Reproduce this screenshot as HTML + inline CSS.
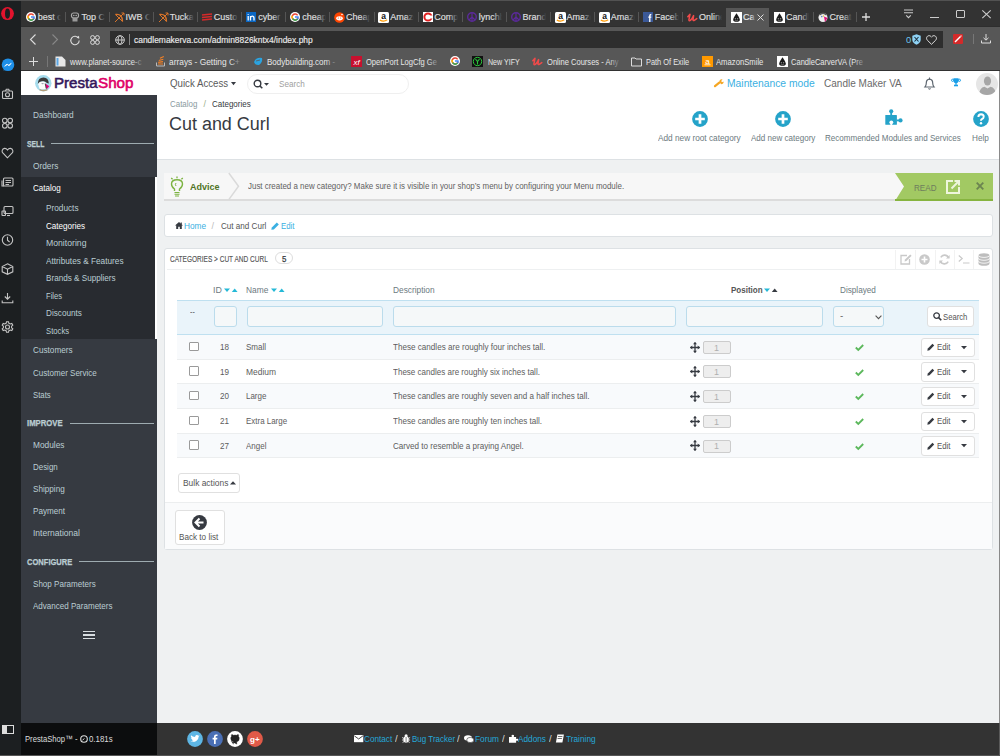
<!DOCTYPE html>
<html><head><meta charset="utf-8">
<style>
*{margin:0;padding:0;box-sizing:border-box}
html,body{width:1000px;height:756px;overflow:hidden;background:#eff1f2;font-family:"Liberation Sans",sans-serif;position:relative}
.a{position:absolute}
.t{position:absolute;white-space:pre;transform-origin:0 0}
svg{position:absolute;overflow:visible}
</style></head><body>
<div class="a" style="left:0px;top:0px;width:21px;height:756px;background:#1c1f21"></div>
<div class="a" style="left:21px;top:0px;width:979px;height:27px;background:#333"></div>
<div class="a" style="left:0px;top:0px;width:1000px;height:1px;background:#525252"></div>
<div class="a" style="left:21px;top:26px;width:979px;height:1px;background:#2e2e2e"></div>
<div class="a" style="left:21px;top:27px;width:979px;height:43px;background:#575757"></div>
<div class="a" style="left:21px;top:70px;width:979px;height:1px;background:#323232"></div>
<div class="a" style="left:110px;top:31px;width:833px;height:17px;background:#2e2e2e"></div>
<div class="a" style="left:21px;top:71px;width:979px;height:24px;background:#fff"></div>
<div class="a" style="left:21px;top:95px;width:136px;height:628px;background:#363a41"></div>
<div class="a" style="left:21px;top:177px;width:134px;height:162px;background:#282b30"></div>
<div class="a" style="left:155px;top:177px;width:2px;height:162px;background:#fff"></div>
<div class="a" style="left:157px;top:95px;width:843px;height:65px;background:#fff;border-bottom:1px solid #dde1e4"></div>
<div class="a" style="left:21px;top:723px;width:136px;height:32px;background:#0c0d0e"></div>
<div class="a" style="left:157px;top:723px;width:843px;height:32px;background:#333"></div>
<div class="a" style="left:999px;top:723px;width:1px;height:32px;background:#5a5a5a"></div>
<div class="a" style="left:0px;top:755px;width:1000px;height:1px;background:#555"></div>
<div class="a" style="left:999px;top:71px;width:1px;height:652px;background:#8a8a8a"></div>
<span class="t" style="left:32.90px;top:111.00px;font-size:8.7px;line-height:8.7px;color:#bbcdd2;font-weight:normal;transform:scaleX(0.9581);">Dashboard</span>
<span class="t" style="left:26.90px;top:140.10px;font-size:8.7px;line-height:8.7px;color:#bbcdd2;font-weight:bold;transform:scaleX(0.7870);-webkit-text-stroke:0.25px #bbcdd2;">SELL</span>
<div class="a" style="left:51px;top:143px;width:103px;height:1px;background:#9eabb0"></div>
<span class="t" style="left:32.90px;top:162.30px;font-size:8.7px;line-height:8.7px;color:#bbcdd2;font-weight:normal;transform:scaleX(0.9575);">Orders</span>
<span class="t" style="left:32.90px;top:184.40px;font-size:8.7px;line-height:8.7px;color:#fff;font-weight:normal;transform:scaleX(0.9255);">Catalog</span>
<span class="t" style="left:45.70px;top:204.20px;font-size:8.7px;line-height:8.7px;color:#bbcdd2;font-weight:normal;transform:scaleX(0.9485);">Products</span>
<span class="t" style="left:45.70px;top:221.70px;font-size:8.7px;line-height:8.7px;color:#fff;font-weight:normal;transform:scaleX(0.9312);">Categories</span>
<span class="t" style="left:45.70px;top:239.20px;font-size:8.7px;line-height:8.7px;color:#bbcdd2;font-weight:normal;transform:scaleX(0.9972);">Monitoring</span>
<span class="t" style="left:45.70px;top:256.71px;font-size:8.7px;line-height:8.7px;color:#bbcdd2;font-weight:normal;transform:scaleX(0.9500);">Attributes &amp; Features</span>
<span class="t" style="left:45.70px;top:274.21px;font-size:8.7px;line-height:8.7px;color:#bbcdd2;font-weight:normal;transform:scaleX(0.9361);">Brands &amp; Suppliers</span>
<span class="t" style="left:45.70px;top:291.71px;font-size:8.7px;line-height:8.7px;color:#bbcdd2;font-weight:normal;transform:scaleX(0.8780);">Files</span>
<span class="t" style="left:45.70px;top:309.21px;font-size:8.7px;line-height:8.7px;color:#bbcdd2;font-weight:normal;transform:scaleX(0.9416);">Discounts</span>
<span class="t" style="left:45.70px;top:326.71px;font-size:8.7px;line-height:8.7px;color:#bbcdd2;font-weight:normal;transform:scaleX(0.8861);">Stocks</span>
<span class="t" style="left:32.90px;top:346.41px;font-size:8.7px;line-height:8.7px;color:#bbcdd2;font-weight:normal;transform:scaleX(0.9435);">Customers</span>
<span class="t" style="left:32.90px;top:368.61px;font-size:8.7px;line-height:8.7px;color:#bbcdd2;font-weight:normal;transform:scaleX(0.9243);">Customer Service</span>
<span class="t" style="left:32.90px;top:390.71px;font-size:8.7px;line-height:8.7px;color:#bbcdd2;font-weight:normal;transform:scaleX(0.8939);">Stats</span>
<span class="t" style="left:26.90px;top:419.21px;font-size:8.7px;line-height:8.7px;color:#bbcdd2;font-weight:bold;transform:scaleX(0.8910);-webkit-text-stroke:0.25px #bbcdd2;">IMPROVE</span>
<div class="a" style="left:70px;top:423px;width:84px;height:1px;background:#9eabb0"></div>
<span class="t" style="left:32.90px;top:441.01px;font-size:8.7px;line-height:8.7px;color:#bbcdd2;font-weight:normal;transform:scaleX(0.9570);">Modules</span>
<span class="t" style="left:32.90px;top:463.11px;font-size:8.7px;line-height:8.7px;color:#bbcdd2;font-weight:normal;transform:scaleX(0.9139);">Design</span>
<span class="t" style="left:32.90px;top:485.21px;font-size:8.7px;line-height:8.7px;color:#bbcdd2;font-weight:normal;transform:scaleX(0.9379);">Shipping</span>
<span class="t" style="left:32.90px;top:507.31px;font-size:8.7px;line-height:8.7px;color:#bbcdd2;font-weight:normal;transform:scaleX(0.9338);">Payment</span>
<span class="t" style="left:32.90px;top:529.41px;font-size:8.7px;line-height:8.7px;color:#bbcdd2;font-weight:normal;transform:scaleX(0.9815);">International</span>
<span class="t" style="left:26.90px;top:557.61px;font-size:8.7px;line-height:8.7px;color:#bbcdd2;font-weight:bold;transform:scaleX(0.8691);-webkit-text-stroke:0.25px #bbcdd2;">CONFIGURE</span>
<div class="a" style="left:79px;top:561px;width:75px;height:1px;background:#9eabb0"></div>
<span class="t" style="left:32.90px;top:579.81px;font-size:8.7px;line-height:8.7px;color:#bbcdd2;font-weight:normal;transform:scaleX(0.9277);">Shop Parameters</span>
<span class="t" style="left:32.90px;top:601.91px;font-size:8.7px;line-height:8.7px;color:#bbcdd2;font-weight:normal;transform:scaleX(0.9250);">Advanced Parameters</span>
<div class="a" style="left:83px;top:631.0px;width:12px;height:1.4px;background:#d8dde0"></div>
<div class="a" style="left:83px;top:634.4px;width:12px;height:1.4px;background:#d8dde0"></div>
<div class="a" style="left:83px;top:637.8px;width:12px;height:1.4px;background:#d8dde0"></div>
<span class="t" style="left:169.90px;top:77.98px;font-size:11.2px;line-height:11.2px;color:#5a5a5a;font-weight:normal;transform:scaleX(0.8665);">Quick Access</span>
<div class="a" style="left:246.5px;top:74px;width:162.5px;height:20px;border:1px solid #efefef;border-radius:10px"></div>
<span class="t" style="left:278.98px;top:80.15px;font-size:9px;line-height:9px;color:#a0a0a0;font-weight:normal;transform:scaleX(0.9052);">Search</span>
<span class="t" style="left:726.64px;top:77.72px;font-size:10.8px;line-height:10.8px;color:#3ab0e2;font-weight:normal;transform:scaleX(0.9561);">Maintenance mode</span>
<span class="t" style="left:823.64px;top:78.02px;font-size:10.8px;line-height:10.8px;color:#6a6a6a;font-weight:normal;transform:scaleX(0.9281);">Candle Maker VA</span>
<span class="t" style="left:169.88px;top:99.95px;font-size:9px;line-height:9px;color:#8a9aa0;font-weight:normal;transform:scaleX(0.8803);">Catalog</span>
<span class="t" style="left:203.55px;top:99.95px;font-size:9px;line-height:9px;color:#9cb08c;font-weight:normal;">/</span>
<span class="t" style="left:212.28px;top:99.95px;font-size:9px;line-height:9px;color:#363a41;font-weight:normal;transform:scaleX(0.8895);">Categories</span>
<span class="t" style="left:169.10px;top:114.62px;font-size:18.8px;line-height:18.8px;color:#363a41;font-weight:normal;transform:scaleX(0.9552);">Cut and Curl</span>
<span class="t" style="left:657.90px;top:134.20px;font-size:8.7px;line-height:8.7px;color:#6c7a80;font-weight:normal;transform:scaleX(0.9505);">Add new root category</span>
<span class="t" style="left:750.50px;top:134.20px;font-size:8.7px;line-height:8.7px;color:#6c7a80;font-weight:normal;transform:scaleX(0.9249);">Add new category</span>
<span class="t" style="left:825.10px;top:134.20px;font-size:8.7px;line-height:8.7px;color:#6c7a80;font-weight:normal;transform:scaleX(0.9252);">Recommended Modules and Services</span>
<span class="t" style="left:972.30px;top:134.20px;font-size:8.7px;line-height:8.7px;color:#6c7a80;font-weight:normal;transform:scaleX(0.9414);">Help</span>
<div class="a" style="left:164px;top:173px;width:829px;height:28px;background:#f7f7f7;border-bottom:2px solid #dcdcdc"></div>
<span class="t" style="left:189.83px;top:181.94px;font-size:9.6px;line-height:9.6px;color:#4f7325;font-weight:bold;transform:scaleX(0.9394);">Advice</span>
<span class="t" style="left:247.90px;top:181.60px;font-size:8.7px;line-height:8.7px;color:#5f5f5f;font-weight:normal;transform:scaleX(0.9135);">Just created a new category? Make sure it is visible in your shop’s menu by configuring your Menu module.</span>
<div class="a" style="left:164px;top:214px;width:829px;height:23px;background:#fff;border:1px solid #dde1e4;border-radius:3px"></div>
<span class="t" style="left:184.18px;top:221.75px;font-size:9px;line-height:9px;color:#3ab0e2;font-weight:normal;transform:scaleX(0.9173);">Home</span>
<span class="t" style="left:211.55px;top:221.75px;font-size:9px;line-height:9px;color:#bbb;font-weight:normal;">/</span>
<span class="t" style="left:221.38px;top:221.75px;font-size:9px;line-height:9px;color:#555;font-weight:normal;transform:scaleX(0.8989);">Cut and Curl</span>
<span class="t" style="left:281.28px;top:221.75px;font-size:9px;line-height:9px;color:#3ab0e2;font-weight:normal;transform:scaleX(0.8710);">Edit</span>
<div class="a" style="left:164px;top:248px;width:829px;height:302px;background:#fff;border:1px solid #dde1e4;border-radius:3px"></div>
<svg style="left:1.2px;top:6.9px" width="13" height="13.2" viewBox="0 0 13 13.2"><ellipse cx="6.5" cy="6.6" rx="6.4" ry="6.5" fill="#e3132d"/><ellipse cx="6.5" cy="6.6" rx="2.5" ry="5.1" fill="#1c1f21"/></svg>
<svg style="left:1px;top:58px" width="14" height="14" viewBox="0 0 14 14"><circle cx="7" cy="6.8" r="6.3" fill="#1e8fe8"/><path d="M2.5 12.8 L3.6 9.8 L5.6 11.2Z" fill="#1e8fe8"/><path d="M3.6 8.3 L5.8 6 L7.3 7.5 L10.3 5.2 L8.2 7.7 L6.7 6.4Z" fill="#fff" stroke="#fff" stroke-width=".6"/></svg>
<svg style="left:1px;top:88px" width="13" height="12" viewBox="0 0 13 12" fill="none" stroke="#c4c4c4" stroke-width="1.1"><rect x="1.5" y="3" width="10" height="7.5" rx="1"/><path d="M4.5 3 L5.3 1.3 H7.7 L8.5 3"/><circle cx="6.5" cy="6.8" r="2"/></svg>
<svg style="left:1px;top:117px" width="13" height="12" viewBox="0 0 13 12" fill="none" stroke="#c4c4c4" stroke-width="1.1"><circle cx="3.8" cy="3.5" r="2.3"/><circle cx="9.2" cy="3.5" r="2.3"/><circle cx="3.8" cy="8.8" r="2.3"/><circle cx="9.2" cy="8.8" r="2.3"/></svg>
<svg style="left:1px;top:147px" width="13" height="12" viewBox="0 0 13 12" fill="none" stroke="#c4c4c4" stroke-width="1.1"><path d="M6.5 10.8 L1.8 6 C0.5 4.5 1 1.8 3.5 1.4 C5 1.2 6 2.3 6.5 3 C7 2.3 8 1.2 9.5 1.4 C12 1.8 12.5 4.5 11.2 6Z"/></svg>
<svg style="left:1px;top:176px" width="13" height="12" viewBox="0 0 13 12" fill="none" stroke="#c4c4c4" stroke-width="1.1"><rect x="2.5" y="2" width="9.5" height="8" rx="1"/><path d="M1 4.5 V10 H3 M4.5 4.5 H10 M4.5 6.5 H10 M4.5 8.5 H8"/></svg>
<svg style="left:1px;top:205px" width="13" height="12" viewBox="0 0 13 12" fill="none" stroke="#c4c4c4" stroke-width="1.1"><rect x="3" y="1.5" width="9" height="7" rx="1"/><rect x="1" y="6" width="3.5" height="4.5" rx=".5"/><path d="M6 10.5 H9"/></svg>
<svg style="left:1px;top:234px" width="13" height="12" viewBox="0 0 13 12" fill="none" stroke="#c4c4c4" stroke-width="1.1"><circle cx="6.5" cy="6" r="5.2"/><path d="M6.5 2.8 V6.2 L8.6 8"/></svg>
<svg style="left:1px;top:263px" width="13" height="12" viewBox="0 0 13 12" fill="none" stroke="#c4c4c4" stroke-width="1.1"><path d="M6.5 0.8 L11.8 3.5 V8.8 L6.5 11.3 L1.2 8.8 V3.5Z M1.2 3.5 L6.5 6.2 L11.8 3.5 M6.5 6.2 V11.3"/></svg>
<svg style="left:1px;top:292px" width="13" height="12" viewBox="0 0 13 12" fill="none" stroke="#c4c4c4" stroke-width="1.1"><path d="M6.5 1 V7 M3.8 4.5 L6.5 7.2 L9.2 4.5 M1.2 8.5 V10.8 H11.8 V8.5"/></svg>
<svg style="left:1px;top:321px" width="13" height="12" viewBox="0 0 13 12" fill="none" stroke="#c4c4c4" stroke-width="1.1"><circle cx="6.5" cy="6" r="2"/><path d="M5.5 0.8 H7.5 L7.9 2.3 L9.3 3 L10.8 2.4 L11.8 4.1 L10.6 5.2 V6.8 L11.8 7.9 L10.8 9.6 L9.3 9 L7.9 9.7 L7.5 11.2 H5.5 L5.1 9.7 L3.7 9 L2.2 9.6 L1.2 7.9 L2.4 6.8 V5.2 L1.2 4.1 L2.2 2.4 L3.7 3 L5.1 2.3Z"/></svg>
<svg style="left:2px;top:725px" width="12" height="9" viewBox="0 0 12 9"><rect x=".5" y=".5" width="11" height="8" fill="none" stroke="#ddd"/><rect x="1" y="1" width="4" height="7" fill="#ddd"/></svg>
<div class="a" style="left:726.3px;top:8px;width:42.6px;height:19px;background:#575757"></div>
<svg style="left:25.6px;top:11.5px" width="11" height="11" viewBox="0 0 11 11"><circle cx="5" cy="5" r="5" fill="#fff"/><path d="M7.6 3.3 A3 3 0 1 0 8 5.6" fill="none" stroke="#ea4335" stroke-width="1.5"/><path d="M2.3 3.8 A3 3 0 0 0 2.6 6.6" fill="none" stroke="#fbbc05" stroke-width="1.5"/><path d="M2.6 6.6 A3 3 0 0 0 7.6 7" fill="none" stroke="#34a853" stroke-width="1.5"/><path d="M5 5 H8 A3 3 0 0 1 7.6 7" fill="none" stroke="#4285f4" stroke-width="1.5"/></svg>
<span class="t" style="left:37.65px;top:13.25px;font-size:9px;line-height:9px;color:#dcdcdc;font-weight:normal;-webkit-text-stroke:0.2px #dcdcdc;">best c</span>
<div class="a" style="left:52.3px;top:10px;width:9px;height:14px;background:linear-gradient(to right, rgba(51,51,51,0), #333)"></div>
<div class="a" style="left:61.3px;top:10px;width:4px;height:14px;background:#333"></div>
<div class="a" style="left:64.8px;top:12px;width:1px;height:10px;background:#555"></div>
<svg style="left:69.7px;top:11.5px" width="11" height="11" viewBox="0 0 11 11"><rect x="1.5" y="1" width="7" height="5" rx="2" fill="none" stroke="#aaa" stroke-width="1.2"/><rect x="2.5" y="5.5" width="5" height="4" fill="#999"/><circle cx="3.8" cy="3.5" r=".8" fill="#aaa"/><circle cx="6.2" cy="3.5" r=".8" fill="#aaa"/></svg>
<span class="t" style="left:81.48px;top:13.25px;font-size:9px;line-height:9px;color:#dcdcdc;font-weight:normal;-webkit-text-stroke:0.2px #dcdcdc;">Top C</span>
<div class="a" style="left:96.4px;top:10px;width:9px;height:14px;background:linear-gradient(to right, rgba(51,51,51,0), #333)"></div>
<div class="a" style="left:105.4px;top:10px;width:4px;height:14px;background:#333"></div>
<div class="a" style="left:108.9px;top:12px;width:1px;height:10px;background:#555"></div>
<svg style="left:113.8px;top:11.5px" width="11" height="11" viewBox="0 0 11 11"><path d="M1.5 2.5 Q8.5 1.5 8.5 9.5" fill="none" stroke="#d9742a" stroke-width="1.3"/><path d="M1.5 2.5 L8.5 9.5 M1 10 L10 1 M7.5 1 H10 V3.5" fill="none" stroke="#d9742a" stroke-width="1"/></svg>
<span class="t" style="left:125.58px;top:13.25px;font-size:9px;line-height:9px;color:#dcdcdc;font-weight:normal;-webkit-text-stroke:0.2px #dcdcdc;">IWB C</span>
<div class="a" style="left:140.5px;top:10px;width:9px;height:14px;background:linear-gradient(to right, rgba(51,51,51,0), #333)"></div>
<div class="a" style="left:149.5px;top:10px;width:4px;height:14px;background:#333"></div>
<div class="a" style="left:153.0px;top:12px;width:1px;height:10px;background:#555"></div>
<svg style="left:157.90000000000003px;top:11.5px" width="11" height="11" viewBox="0 0 11 11"><path d="M1.5 2.5 Q8.5 1.5 8.5 9.5" fill="none" stroke="#d9742a" stroke-width="1.3"/><path d="M1.5 2.5 L8.5 9.5 M1 10 L10 1 M7.5 1 H10 V3.5" fill="none" stroke="#d9742a" stroke-width="1"/></svg>
<span class="t" style="left:169.68px;top:13.25px;font-size:9px;line-height:9px;color:#dcdcdc;font-weight:normal;-webkit-text-stroke:0.2px #dcdcdc;">Tuckal</span>
<div class="a" style="left:184.60000000000002px;top:10px;width:9px;height:14px;background:linear-gradient(to right, rgba(51,51,51,0), #333)"></div>
<div class="a" style="left:193.60000000000002px;top:10px;width:4px;height:14px;background:#333"></div>
<div class="a" style="left:197.10000000000002px;top:12px;width:1px;height:10px;background:#555"></div>
<svg style="left:202.00000000000003px;top:11.5px" width="11" height="11" viewBox="0 0 11 11"><path d="M0 3 L10 2 M0 5.5 L10 4.5 M0 8 L10 7" stroke="#d42a2a" stroke-width="1.6"/></svg>
<span class="t" style="left:213.78px;top:13.25px;font-size:9px;line-height:9px;color:#dcdcdc;font-weight:normal;-webkit-text-stroke:0.2px #dcdcdc;">Custo</span>
<div class="a" style="left:228.70000000000002px;top:10px;width:9px;height:14px;background:linear-gradient(to right, rgba(51,51,51,0), #333)"></div>
<div class="a" style="left:237.70000000000002px;top:10px;width:4px;height:14px;background:#333"></div>
<div class="a" style="left:241.20000000000002px;top:12px;width:1px;height:10px;background:#555"></div>
<svg style="left:246.10000000000002px;top:11.5px" width="11" height="11" viewBox="0 0 11 11"><rect x="0" y="0" width="10" height="10" fill="#0a66c2"/><path d="M2.2 4 V8.5 M2.2 2 V2.8 M4.5 8.5 V4 M4.5 5.5 Q5.5 3.8 7 4.3 Q8 4.7 8 6 V8.5" stroke="#fff" stroke-width="1.3" fill="none"/></svg>
<span class="t" style="left:258.15px;top:13.25px;font-size:9px;line-height:9px;color:#dcdcdc;font-weight:normal;-webkit-text-stroke:0.2px #dcdcdc;">cyber</span>
<div class="a" style="left:272.8px;top:10px;width:9px;height:14px;background:linear-gradient(to right, rgba(51,51,51,0), #333)"></div>
<div class="a" style="left:281.8px;top:10px;width:4px;height:14px;background:#333"></div>
<div class="a" style="left:285.3px;top:12px;width:1px;height:10px;background:#555"></div>
<svg style="left:290.20000000000005px;top:11.5px" width="11" height="11" viewBox="0 0 11 11"><circle cx="5" cy="5" r="5" fill="#fff"/><path d="M7.6 3.3 A3 3 0 1 0 8 5.6" fill="none" stroke="#ea4335" stroke-width="1.5"/><path d="M2.3 3.8 A3 3 0 0 0 2.6 6.6" fill="none" stroke="#fbbc05" stroke-width="1.5"/><path d="M2.6 6.6 A3 3 0 0 0 7.6 7" fill="none" stroke="#34a853" stroke-width="1.5"/><path d="M5 5 H8 A3 3 0 0 1 7.6 7" fill="none" stroke="#4285f4" stroke-width="1.5"/></svg>
<span class="t" style="left:302.25px;top:13.25px;font-size:9px;line-height:9px;color:#dcdcdc;font-weight:normal;-webkit-text-stroke:0.2px #dcdcdc;">cheap</span>
<div class="a" style="left:316.90000000000003px;top:10px;width:9px;height:14px;background:linear-gradient(to right, rgba(51,51,51,0), #333)"></div>
<div class="a" style="left:325.90000000000003px;top:10px;width:4px;height:14px;background:#333"></div>
<div class="a" style="left:329.40000000000003px;top:12px;width:1px;height:10px;background:#555"></div>
<svg style="left:334.3px;top:11.5px" width="11" height="11" viewBox="0 0 11 11"><circle cx="5.5" cy="5.5" r="5.3" fill="#ff4500"/><ellipse cx="5.5" cy="6.3" rx="3.3" ry="2.1" fill="#fff"/><circle cx="4.3" cy="6" r=".6" fill="#ff4500"/><circle cx="6.7" cy="6" r=".6" fill="#ff4500"/><circle cx="8" cy="2.5" r=".8" fill="#fff"/></svg>
<span class="t" style="left:346.08px;top:13.25px;font-size:9px;line-height:9px;color:#dcdcdc;font-weight:normal;-webkit-text-stroke:0.2px #dcdcdc;">Cheap</span>
<div class="a" style="left:361.0px;top:10px;width:9px;height:14px;background:linear-gradient(to right, rgba(51,51,51,0), #333)"></div>
<div class="a" style="left:370.0px;top:10px;width:4px;height:14px;background:#333"></div>
<div class="a" style="left:373.5px;top:12px;width:1px;height:10px;background:#555"></div>
<svg style="left:378.40000000000003px;top:11.5px" width="11" height="11" viewBox="0 0 11 11"><rect x="0" y="0" width="11" height="11" rx="1.5" fill="#fff"/><text x="5.5" y="7" font-size="8.5" font-family="Liberation Sans" font-weight="bold" text-anchor="middle" fill="#111">a</text><path d="M1.8 8 Q5.5 10.3 9.2 7.8" fill="none" stroke="#f90" stroke-width="1.2"/></svg>
<span class="t" style="left:390.18px;top:13.25px;font-size:9px;line-height:9px;color:#dcdcdc;font-weight:normal;-webkit-text-stroke:0.2px #dcdcdc;">Amazo</span>
<div class="a" style="left:405.1px;top:10px;width:9px;height:14px;background:linear-gradient(to right, rgba(51,51,51,0), #333)"></div>
<div class="a" style="left:414.1px;top:10px;width:4px;height:14px;background:#333"></div>
<div class="a" style="left:417.6px;top:12px;width:1px;height:10px;background:#555"></div>
<svg style="left:422.50000000000006px;top:11.5px" width="11" height="11" viewBox="0 0 11 11"><rect x="0" y="0" width="10" height="10" fill="#fff"/><circle cx="5" cy="5" r="3.6" fill="none" stroke="#e02020" stroke-width="2"/><rect x="7" y="3.5" width="3" height="3" fill="#fff"/></svg>
<span class="t" style="left:434.28px;top:13.25px;font-size:9px;line-height:9px;color:#dcdcdc;font-weight:normal;-webkit-text-stroke:0.2px #dcdcdc;">Comp</span>
<div class="a" style="left:449.20000000000005px;top:10px;width:9px;height:14px;background:linear-gradient(to right, rgba(51,51,51,0), #333)"></div>
<div class="a" style="left:458.20000000000005px;top:10px;width:4px;height:14px;background:#333"></div>
<div class="a" style="left:461.70000000000005px;top:12px;width:1px;height:10px;background:#555"></div>
<svg style="left:466.6px;top:11.5px" width="11" height="11" viewBox="0 0 11 11"><circle cx="5" cy="5" r="4.3" fill="none" stroke="#5b2a9a" stroke-width="1.4"/><path d="M5 0.7 V9.3 M5 5 L2 8 M5 5 L8 8" stroke="#5b2a9a" stroke-width="1.2"/></svg>
<span class="t" style="left:478.65px;top:13.25px;font-size:9px;line-height:9px;color:#dcdcdc;font-weight:normal;-webkit-text-stroke:0.2px #dcdcdc;">lynchb</span>
<div class="a" style="left:493.3px;top:10px;width:9px;height:14px;background:linear-gradient(to right, rgba(51,51,51,0), #333)"></div>
<div class="a" style="left:502.3px;top:10px;width:4px;height:14px;background:#333"></div>
<div class="a" style="left:505.8px;top:12px;width:1px;height:10px;background:#555"></div>
<svg style="left:510.70000000000005px;top:11.5px" width="11" height="11" viewBox="0 0 11 11"><circle cx="5" cy="5" r="4.3" fill="none" stroke="#5b2a9a" stroke-width="1.4"/><path d="M5 0.7 V9.3 M5 5 L2 8 M5 5 L8 8" stroke="#5b2a9a" stroke-width="1.2"/></svg>
<span class="t" style="left:522.48px;top:13.25px;font-size:9px;line-height:9px;color:#dcdcdc;font-weight:normal;-webkit-text-stroke:0.2px #dcdcdc;">Brand</span>
<div class="a" style="left:537.4000000000001px;top:10px;width:9px;height:14px;background:linear-gradient(to right, rgba(51,51,51,0), #333)"></div>
<div class="a" style="left:546.4000000000001px;top:10px;width:4px;height:14px;background:#333"></div>
<div class="a" style="left:549.9000000000001px;top:12px;width:1px;height:10px;background:#555"></div>
<svg style="left:554.8px;top:11.5px" width="11" height="11" viewBox="0 0 11 11"><rect x="0" y="0" width="11" height="11" rx="1.5" fill="#fff"/><text x="5.5" y="7" font-size="8.5" font-family="Liberation Sans" font-weight="bold" text-anchor="middle" fill="#111">a</text><path d="M1.8 8 Q5.5 10.3 9.2 7.8" fill="none" stroke="#f90" stroke-width="1.2"/></svg>
<span class="t" style="left:566.58px;top:13.25px;font-size:9px;line-height:9px;color:#dcdcdc;font-weight:normal;-webkit-text-stroke:0.2px #dcdcdc;">Amazo</span>
<div class="a" style="left:581.5px;top:10px;width:9px;height:14px;background:linear-gradient(to right, rgba(51,51,51,0), #333)"></div>
<div class="a" style="left:590.5px;top:10px;width:4px;height:14px;background:#333"></div>
<div class="a" style="left:594.0px;top:12px;width:1px;height:10px;background:#555"></div>
<svg style="left:598.9px;top:11.5px" width="11" height="11" viewBox="0 0 11 11"><rect x="0" y="0" width="11" height="11" rx="1.5" fill="#fff"/><text x="5.5" y="7" font-size="8.5" font-family="Liberation Sans" font-weight="bold" text-anchor="middle" fill="#111">a</text><path d="M1.8 8 Q5.5 10.3 9.2 7.8" fill="none" stroke="#f90" stroke-width="1.2"/></svg>
<span class="t" style="left:610.68px;top:13.25px;font-size:9px;line-height:9px;color:#dcdcdc;font-weight:normal;-webkit-text-stroke:0.2px #dcdcdc;">Amazo</span>
<div class="a" style="left:625.6px;top:10px;width:9px;height:14px;background:linear-gradient(to right, rgba(51,51,51,0), #333)"></div>
<div class="a" style="left:634.6px;top:10px;width:4px;height:14px;background:#333"></div>
<div class="a" style="left:638.1px;top:12px;width:1px;height:10px;background:#555"></div>
<svg style="left:642.9999999999999px;top:11.5px" width="11" height="11" viewBox="0 0 11 11"><rect x="0" y="0" width="10" height="10" fill="#3b5998"/><path d="M6.8 10 V5.2 H8.2 M5.3 5.2 H8.3 M6.8 5.2 V3.8 Q6.8 2.5 8.3 2.5" fill="none" stroke="#fff" stroke-width="1.3"/></svg>
<span class="t" style="left:654.78px;top:13.25px;font-size:9px;line-height:9px;color:#dcdcdc;font-weight:normal;-webkit-text-stroke:0.2px #dcdcdc;">Faceb</span>
<div class="a" style="left:669.6999999999999px;top:10px;width:9px;height:14px;background:linear-gradient(to right, rgba(51,51,51,0), #333)"></div>
<div class="a" style="left:678.6999999999999px;top:10px;width:4px;height:14px;background:#333"></div>
<div class="a" style="left:682.1999999999999px;top:12px;width:1px;height:10px;background:#555"></div>
<svg style="left:687.0999999999999px;top:11.5px" width="11" height="11" viewBox="0 0 11 11"><path d="M0.8 4.8 L3 2.3 L1.9 8 Q2 9.3 3.4 8.4 Q5.3 6.6 6.6 3.6 L6 7.8 Q6.1 9 7.3 8.3 L9.8 6.6" fill="none" stroke="#f04a4a" stroke-width="1.5" stroke-linecap="round" stroke-linejoin="round"/></svg>
<span class="t" style="left:698.88px;top:13.25px;font-size:9px;line-height:9px;color:#dcdcdc;font-weight:normal;-webkit-text-stroke:0.2px #dcdcdc;">Online</span>
<div class="a" style="left:713.3px;top:10px;width:9px;height:14px;background:linear-gradient(to right, rgba(51,51,51,0), #333)"></div>
<div class="a" style="left:722.3px;top:10px;width:4px;height:14px;background:#333"></div>
<svg style="left:731.1999999999999px;top:11.5px" width="11" height="11" viewBox="0 0 11 11"><rect x="0" y="0" width="11" height="11" fill="#fff"/><path d="M5.5 1.2 Q8.8 6 8.8 7.8 Q8.8 9.8 5.5 9.8 Q2.2 9.8 2.2 7.8 Q2.2 6 5.5 1.2Z" fill="#1a1a1a"/><circle cx="4.4" cy="6.8" r=".7" fill="#888"/><circle cx="6.6" cy="6.8" r=".7" fill="#888"/><path d="M3.8 8.6 H7.2" stroke="#888" stroke-width=".6"/></svg>
<span class="t" style="left:742.98px;top:13.25px;font-size:9px;line-height:9px;color:#e4e4e4;font-weight:normal;-webkit-text-stroke:0.2px #e4e4e4;">Ca</span>
<div class="a" style="left:750.9px;top:10px;width:5px;height:14px;background:linear-gradient(to right, rgba(87,87,87,0), #575757)"></div>
<svg style="left:756.9px;top:14px" width="7" height="7" viewBox="0 0 7 7"><path d="M0.5 0.5 L6.5 6.5 M6.5 0.5 L0.5 6.5" stroke="#ddd" stroke-width="1"/></svg>
<svg style="left:774.3px;top:11.5px" width="11" height="11" viewBox="0 0 11 11"><rect x="0" y="0" width="11" height="11" fill="#fff"/><path d="M5.5 1.2 Q8.8 6 8.8 7.8 Q8.8 9.8 5.5 9.8 Q2.2 9.8 2.2 7.8 Q2.2 6 5.5 1.2Z" fill="#1a1a1a"/><circle cx="4.4" cy="6.8" r=".7" fill="#888"/><circle cx="6.6" cy="6.8" r=".7" fill="#888"/><path d="M3.8 8.6 H7.2" stroke="#888" stroke-width=".6"/></svg>
<span class="t" style="left:786.08px;top:13.25px;font-size:9px;line-height:9px;color:#dcdcdc;font-weight:normal;-webkit-text-stroke:0.2px #dcdcdc;">Candl</span>
<div class="a" style="left:800.2px;top:10px;width:9px;height:14px;background:linear-gradient(to right, rgba(51,51,51,0), #333)"></div>
<div class="a" style="left:809.2px;top:10px;width:4px;height:14px;background:#333"></div>
<div class="a" style="left:812.7px;top:12px;width:1px;height:10px;background:#555"></div>
<svg style="left:817.8px;top:11.5px" width="11" height="11" viewBox="0 0 11 11"><circle cx="5" cy="5.5" r="4.5" fill="#f0f0f0"/><path d="M1.5 3 Q5 -0.5 8.5 3" fill="none" stroke="#555" stroke-width="1.2"/><path d="M6 4.5 L9.5 6 L7 10Z" fill="#e0107a"/><circle cx="3.8" cy="4.6" r=".8" fill="#5a7ac8"/><circle cx="5.5" cy="4" r=".7" fill="#e8c020"/></svg>
<span class="t" style="left:829.58px;top:13.25px;font-size:9px;line-height:9px;color:#dcdcdc;font-weight:normal;-webkit-text-stroke:0.2px #dcdcdc;">Create</span>
<div class="a" style="left:843.4px;top:10px;width:9px;height:14px;background:linear-gradient(to right, rgba(51,51,51,0), #333)"></div>
<div class="a" style="left:852.4px;top:10px;width:4px;height:14px;background:#333"></div>
<div class="a" style="left:855.9px;top:12px;width:1px;height:10px;background:#555"></div>
<svg style="left:862px;top:13px" width="8" height="8" viewBox="0 0 8 8"><path d="M4 0 V8 M0 4 H8" stroke="#ddd" stroke-width="1.3"/></svg>
<svg style="left:904px;top:8.5px" width="9" height="10" viewBox="0 0 9 10"><path d="M0 1 H9 M0 3.7 H9 M2.2 6.3 L4.5 8.6 L6.8 6.3" fill="none" stroke="#ccc" stroke-width="1.1"/></svg>
<div class="a" style="left:930px;top:17px;width:8.5px;height:1px;background:#ccc"></div>
<div class="a" style="left:955.7px;top:9.5px;width:9px;height:8.5px;border:1.2px solid #ccc;border-radius:1px"></div>
<svg style="left:982px;top:9.5px" width="9" height="8.5" viewBox="0 0 9 8.5"><path d="M0.3 0.3 L8.7 8.2 M8.7 0.3 L0.3 8.2" stroke="#ccc" stroke-width="1.1"/></svg>
<svg style="left:29px;top:34px" width="8" height="11" viewBox="0 0 8 11"><path d="M6.5 0.5 L1.5 5.5 L6.5 10.5" fill="none" stroke="#ddd" stroke-width="1.1"/></svg>
<svg style="left:51px;top:34px" width="8" height="11" viewBox="0 0 8 11"><path d="M1.5 0.5 L6.5 5.5 L1.5 10.5" fill="none" stroke="#888" stroke-width="1.1"/></svg>
<svg style="left:70px;top:34.5px" width="10" height="10" viewBox="0 0 10 10"><path d="M8.6 3.3 A4.2 4.2 0 1 0 9.2 5.5" fill="none" stroke="#ddd" stroke-width="1.1"/><path d="M6.5 2.5 L9.3 3.6 L9 0.8Z" fill="#ddd"/></svg>
<svg style="left:90px;top:35px" width="10" height="10" viewBox="0 0 10 10" fill="none" stroke="#ddd" stroke-width="1"><circle cx="2.6" cy="2.6" r="2"/><circle cx="7.4" cy="2.6" r="2"/><circle cx="2.6" cy="7.4" r="2"/><circle cx="7.4" cy="7.4" r="2"/></svg>
<svg style="left:114.5px;top:34.5px" width="10" height="10" viewBox="0 0 10 10" fill="none" stroke="#ccc" stroke-width="1"><circle cx="5" cy="5" r="4.3"/><ellipse cx="5" cy="5" rx="2" ry="4.3"/><path d="M0.7 5 H9.3"/></svg>
<div class="a" style="left:128.5px;top:34px;width:1.2px;height:11px;background:#888"></div>
<span class="t" style="left:134.17px;top:35.67px;font-size:8.5px;line-height:8.5px;color:#eaeaea;font-weight:normal;transform:scaleX(0.9927);-webkit-text-stroke:0.15px #eaeaea;">candlemakerva.com/admin8826kntx4/index.php</span>
<span class="t" style="left:906.05px;top:35.95px;font-size:9px;line-height:9px;color:#6cc3f0;font-weight:normal;transform:scaleX(1.0437);">0</span>
<svg style="left:912px;top:34px" width="9" height="11" viewBox="0 0 9 11"><path d="M4.5 0.3 L8.7 1.8 V5.5 Q8.7 9 4.5 10.7 Q0.3 9 0.3 5.5 V1.8Z" fill="#8fd3f5"/><path d="M2.5 3 L6.5 7.5 M6.5 3 L2.5 7.5" stroke="#1f3240" stroke-width="1.1"/></svg>
<svg style="left:926px;top:35px" width="11" height="10" viewBox="0 0 11 10"><path d="M5.5 9.3 L1.3 5.2 C-0.2 3.5 0.7 0.8 3 0.7 C4.3 0.6 5 1.5 5.5 2.2 C6 1.5 6.7 0.6 8 0.7 C10.3 0.8 11.2 3.5 9.7 5.2Z" fill="none" stroke="#ddd" stroke-width="1"/></svg>
<svg style="left:953px;top:34px" width="10" height="10" viewBox="0 0 10 10"><rect width="10" height="10" rx="1.3" fill="#d42a2a"/><path d="M2 8 L7.5 2.5" stroke="#fff" stroke-width="1.4"/><path d="M8 1.3 V2.6 M7.6 2 H8.6" stroke="#fff" stroke-width=".6"/></svg>
<div class="a" style="left:973px;top:34px;width:1px;height:10px;background:#777"></div>
<svg style="left:981px;top:34px" width="10" height="10" viewBox="0 0 10 10" fill="none" stroke="#ddd" stroke-width="1"><path d="M5 0 V6 M2.5 3.8 L5 6.2 L7.5 3.8 M0.5 6.5 V9 H9.5 V6.5"/></svg>
<svg style="left:28.5px;top:56.5px" width="9" height="9" viewBox="0 0 9 9"><path d="M4.5 0 V9 M0 4.5 H9" stroke="#ddd" stroke-width="1"/></svg>
<div class="a" style="left:46.5px;top:56px;width:1.2px;height:10.5px;background:#777"></div>
<svg style="left:55px;top:56px" width="11" height="11" viewBox="0 0 11 11"><path d="M0.5 0.5 H7 L10.5 4 V10.5 H0.5Z" fill="#e8e8e8"/><rect x="1.5" y="2" width="2" height="7.5" fill="#5aa7e6"/></svg>
<span class="t" style="left:70.25px;top:57.95px;font-size:9px;line-height:9px;color:#e8e8e8;font-weight:normal;transform:scaleX(0.8559);">www.planet-source-c</span>
<div class="a" style="left:132.0px;top:55px;width:12px;height:14px;background:linear-gradient(to right, rgba(87,87,87,0), #575757)"></div>
<span class="t" style="left:168.55px;top:57.95px;font-size:9px;line-height:9px;color:#e8e8e8;font-weight:normal;transform:scaleX(0.9296);">arrays - Getting C+</span>
<div class="a" style="left:229.7px;top:55px;width:12px;height:14px;background:linear-gradient(to right, rgba(87,87,87,0), #575757)"></div>
<span class="t" style="left:267.28px;top:57.95px;font-size:9px;line-height:9px;color:#e8e8e8;font-weight:normal;transform:scaleX(0.8899);">Bodybuilding.com -</span>
<div class="a" style="left:325.8px;top:55px;width:12px;height:14px;background:linear-gradient(to right, rgba(87,87,87,0), #575757)"></div>
<span class="t" style="left:366.28px;top:57.95px;font-size:9px;line-height:9px;color:#e8e8e8;font-weight:normal;transform:scaleX(0.8385);">OpenPort LogCfg Ge</span>
<div class="a" style="left:427.6px;top:55px;width:12px;height:14px;background:linear-gradient(to right, rgba(87,87,87,0), #575757)"></div>
<span class="t" style="left:487.88px;top:57.95px;font-size:9px;line-height:9px;color:#e8e8e8;font-weight:normal;transform:scaleX(0.7850);">New YIFY</span>
<span class="t" style="left:547.08px;top:57.95px;font-size:9px;line-height:9px;color:#e8e8e8;font-weight:normal;transform:scaleX(0.8407);">Online Courses - Any</span>
<div class="a" style="left:609.0px;top:55px;width:12px;height:14px;background:linear-gradient(to right, rgba(87,87,87,0), #575757)"></div>
<span class="t" style="left:645.78px;top:57.95px;font-size:9px;line-height:9px;color:#e8e8e8;font-weight:normal;transform:scaleX(0.8223);">Path Of Exile</span>
<span class="t" style="left:716.48px;top:57.95px;font-size:9px;line-height:9px;color:#e8e8e8;font-weight:normal;transform:scaleX(0.8537);">AmazonSmile</span>
<span class="t" style="left:791.28px;top:57.95px;font-size:9px;line-height:9px;color:#e8e8e8;font-weight:normal;transform:scaleX(0.8373);">CandleCarverVA (Pre</span>
<div class="a" style="left:853.6px;top:55px;width:12px;height:14px;background:linear-gradient(to right, rgba(87,87,87,0), #575757)"></div>
<svg style="left:154.7px;top:56px" width="11" height="11" viewBox="0 0 11 11"><path d="M1.5 6.5 V10 H9.5 V6.5" fill="none" stroke="#bbb" stroke-width="1"/><path d="M3 8 H8 M3.2 6.4 L8 5.6 M3.8 4.5 L8.3 3.2 M5 2.3 L8.8 0.6" stroke="#f48024" stroke-width="1.1"/></svg>
<svg style="left:253px;top:56px" width="11" height="11" viewBox="0 0 11 11"><path d="M1 6 Q3 1 9 2 Q10 6 6 9 Q2 9.5 1 6Z" fill="#2ba3e0"/><path d="M3 5 L7 4" stroke="#575757" stroke-width=".8"/></svg>
<svg style="left:351.4px;top:56px" width="11" height="11" viewBox="0 0 11 11"><rect width="11" height="11" fill="#c8102e"/><text x="5.5" y="8.5" font-size="8" font-family="Liberation Sans" text-anchor="middle" fill="#fff" font-style="italic">xf</text></svg>
<svg style="left:449.6px;top:56px" width="11" height="11" viewBox="0 0 11 11"><circle cx="5" cy="5" r="5" fill="#fff"/><path d="M7.6 3.3 A3 3 0 1 0 8 5.6" fill="none" stroke="#ea4335" stroke-width="1.5"/><path d="M2.3 3.8 A3 3 0 0 0 2.6 6.6" fill="none" stroke="#fbbc05" stroke-width="1.5"/><path d="M2.6 6.6 A3 3 0 0 0 7.6 7" fill="none" stroke="#34a853" stroke-width="1.5"/><path d="M5 5 H8 A3 3 0 0 1 7.6 7" fill="none" stroke="#4285f4" stroke-width="1.5"/></svg>
<svg style="left:472px;top:56px" width="11" height="11" viewBox="0 0 11 11"><rect width="11" height="11" fill="#111"/><circle cx="5.5" cy="5.5" r="4.2" fill="none" stroke="#29c43a" stroke-width="1"/><path d="M3.5 3 L5.5 5.5 L7.5 3 M5.5 5.5 V8.5" stroke="#29c43a" stroke-width="1.1" fill="none"/></svg>
<svg style="left:532px;top:56px" width="11" height="11" viewBox="0 0 11 11"><path d="M0.8 4.8 L3 2.3 L1.9 8 Q2 9.3 3.4 8.4 Q5.3 6.6 6.6 3.6 L6 7.8 Q6.1 9 7.3 8.3 L9.8 6.6" fill="none" stroke="#f04a4a" stroke-width="1.5" stroke-linecap="round" stroke-linejoin="round"/></svg>
<svg style="left:631px;top:56px" width="11" height="11" viewBox="0 0 11 11"><path d="M0.5 2 H4 L5 3 H10.5 V10 H0.5Z" fill="none" stroke="#ddd" stroke-width="1"/></svg>
<svg style="left:701.6px;top:56px" width="11" height="11" viewBox="0 0 11 11"><rect width="11" height="11" fill="#f90"/><text x="5.5" y="7.5" font-size="8" font-family="Liberation Sans" text-anchor="middle" fill="#fff">a</text><path d="M2.5 8.8 H8.5" stroke="#fff" stroke-width=".8"/></svg>
<svg style="left:776.5px;top:56px" width="11" height="11" viewBox="0 0 11 11"><rect x="0" y="0" width="11" height="11" fill="#fff"/><path d="M5.5 1.2 Q8.8 6 8.8 7.8 Q8.8 9.8 5.5 9.8 Q2.2 9.8 2.2 7.8 Q2.2 6 5.5 1.2Z" fill="#1a1a1a"/><circle cx="4.4" cy="6.8" r=".7" fill="#888"/><circle cx="6.6" cy="6.8" r=".7" fill="#888"/><path d="M3.8 8.6 H7.2" stroke="#888" stroke-width=".6"/></svg>
<svg style="left:34.5px;top:74.5px" width="17" height="17" viewBox="0 0 17 17"><circle cx="8.3" cy="8.3" r="8.2" fill="#a5dbec"/><path d="M2.8 9 Q3 2.6 8.5 2.6 Q13.6 2.8 13.8 8.5 L12 8 Q10 5.5 5 6.8 Z" fill="#3a3a3a"/><path d="M3.2 9.2 Q3.8 6.6 8 6.6 Q11 7 11.3 9.5 L11 13.8 Q7 15.2 4.4 13.6Z" fill="#fbfbfb"/><ellipse cx="7.6" cy="8.6" rx="1.3" ry=".7" fill="#9aa3b0"/><path d="M10.4 8.6 L14.3 11.3 L11.6 14.3Z" fill="#e5007a"/><path d="M10.2 8.5 L11.2 13.5" stroke="#222" stroke-width=".8"/><path d="M4.6 14.6 Q8.5 16.4 12.4 14.6" fill="none" stroke="#b49c78" stroke-width="1.3"/></svg>
<span class="t" style="left:53.63px;top:76.30px;font-size:14px;line-height:14px;color:#34175c;font-weight:normal;transform:scaleX(1.0775);-webkit-text-stroke:0.55px #34175c;">Presta</span>
<span class="t" style="left:97.98px;top:76.30px;font-size:14px;line-height:14px;color:#df0067;font-weight:normal;transform:scaleX(1.0858);-webkit-text-stroke:0.55px #df0067;">Shop</span>
<svg style="left:231.4px;top:81.6px" width="5" height="3.3" viewBox="0 0 5 3.3"><path d="M0 0 H5 L2.5 3.3Z" fill="#363a41"/></svg>
<svg style="left:252.5px;top:78.5px" width="16" height="11" viewBox="0 0 16 11"><circle cx="4.5" cy="4.5" r="3.3" fill="none" stroke="#363a41" stroke-width="1.4"/><path d="M7 7 L9.3 9.3" stroke="#363a41" stroke-width="1.6"/><path d="M11 4 H16 L13.5 6.8Z" fill="#363a41"/></svg>
<svg style="left:713.6px;top:78.8px" width="10" height="8" viewBox="0 0 10 8"><path d="M1 7.2 L5.3 3.6" stroke="#f5a623" stroke-width="2.2" stroke-linecap="round"/><path d="M5.2 2.2 Q6 0 8.5 0.4 L7.2 2 L8 3.2 L9.6 2.4 Q9.8 5 7 5.2Z" fill="#f5a623"/></svg>
<svg style="left:924px;top:76.8px" width="11" height="13" viewBox="0 0 11 13"><path d="M1 10 Q2.3 8.5 2.3 6 Q2.3 2.5 5.5 2.2 Q8.7 2.5 8.7 6 Q8.7 8.5 10 10Z" fill="none" stroke="#5e6770" stroke-width="1.2"/><path d="M5.5 0.5 V2 M4.3 11.5 Q5.5 12.8 6.7 11.5" stroke="#5e6770" stroke-width="1.1" fill="none"/></svg>
<svg style="left:950.8px;top:78px" width="10" height="9" viewBox="0 0 10 9"><path d="M2.4 0.3 H7.6 V2.8 Q7.6 5.2 5 5.4 Q2.4 5.2 2.4 2.8Z" fill="#1a9fe8"/><circle cx="1.6" cy="2.3" r="1.1" fill="none" stroke="#1a9fe8" stroke-width="1"/><circle cx="8.4" cy="2.3" r="1.1" fill="none" stroke="#1a9fe8" stroke-width="1"/><rect x="4.3" y="5.2" width="1.4" height="1.6" fill="#1a9fe8"/><rect x="3" y="6.7" width="4" height="1.6" fill="#1a9fe8"/></svg>
<div class="a" style="left:975.5px;top:72.5px;width:22px;height:22px;border-radius:50%;background:#e6e6e6;overflow:hidden"><svg style="left:0;top:0" width="22" height="22" viewBox="0 0 22 22"><ellipse cx="11.5" cy="8" rx="3.6" ry="4.6" fill="#a6a6a6"/><path d="M3 22 Q3.5 14.5 8.5 13.8 L11.5 15.5 L14.5 13.8 Q19.5 14.5 20 22Z" fill="#a6a6a6"/></svg></div>
<svg style="left:692px;top:110.5px" width="16" height="16" viewBox="0 0 16 16"><circle cx="8" cy="8" r="7.9" fill="#25a3c9"/><path d="M8 3.2 V12.8 M3.2 8 H12.8" stroke="#fff" stroke-width="2.7"/></svg>
<svg style="left:775.2px;top:110.5px" width="16" height="16" viewBox="0 0 16 16"><circle cx="8" cy="8" r="7.9" fill="#25a3c9"/><path d="M8 3.2 V12.8 M3.2 8 H12.8" stroke="#fff" stroke-width="2.7"/></svg>
<svg style="left:884px;top:108px" width="20" height="18" viewBox="0 0 20 18"><rect x="1.3" y="6.9" width="11.6" height="9.9" rx="0.6" fill="#25a3c9"/><circle cx="7.2" cy="3.3" r="2.1" fill="#25a3c9"/><rect x="6.3" y="4" width="1.8" height="3.5" fill="#25a3c9"/><circle cx="16.5" cy="12.4" r="2.1" fill="#25a3c9"/><rect x="12.5" y="11.5" width="3" height="1.8" fill="#25a3c9"/><circle cx="7.3" cy="14.3" r="1.9" fill="#fff"/><rect x="6.4" y="14.5" width="1.8" height="3" fill="#fff"/></svg>
<svg style="left:973.1px;top:110.5px" width="16" height="16" viewBox="0 0 16 16"><circle cx="8" cy="8" r="7.9" fill="#25a3c9"/><path d="M5.4 6 Q5.4 3.3 8.1 3.3 Q10.8 3.4 10.7 5.8 Q10.6 7.4 8.9 8.2 Q8 8.7 8 9.8" fill="none" stroke="#fff" stroke-width="2"/><circle cx="8" cy="12.3" r="1.2" fill="#fff"/></svg>
<svg style="left:170px;top:176px" width="14" height="21" viewBox="0 0 14 21"><path d="M4.5 15 V13 Q1.5 11 1.5 8 Q1.5 3.8 7 3.8 Q12.5 3.8 12.5 8 Q12.5 11 9.5 13 V15" fill="none" stroke="#7cb342" stroke-width="1.4"/><path d="M6 7 Q4.8 8.5 6 10" fill="none" stroke="#7cb342" stroke-width="1"/><path d="M4.5 16.5 H9.5 M4.5 18.3 H9.5 M5 20 H9" stroke="#7cb342" stroke-width="1.1"/><path d="M7 0.5 V2.3 M1.2 2 L2.6 3.3 M12.8 2 L11.4 3.3" stroke="#7cb342" stroke-width="1.3"/></svg>
<svg style="left:228px;top:173px" width="12" height="27" viewBox="0 0 12 27"><path d="M0.8 0 L10.5 13.3 L0.8 26.6" fill="none" stroke="#dadada" stroke-width="1.5"/></svg>
<svg style="left:895px;top:173px" width="98" height="28" viewBox="0 0 98 28"><path d="M0 0 H98 V28 H0 L9 13.5Z" fill="#a2c963"/><path d="M0 26 H98 V28 H0Z" fill="#86b43f"/></svg>
<span class="t" style="left:914.02px;top:183.07px;font-size:9.8px;line-height:9.8px;color:#6e7d5e;font-weight:normal;transform:scaleX(0.8271);">READ</span>
<svg style="left:946px;top:179.8px" width="14" height="14" viewBox="0 0 14 14"><path d="M7 1 H1 V13 H13 V7" fill="none" stroke="#eef6dd" stroke-width="2"/><path d="M5.5 8.5 L12.5 1.5 M8.5 1 H13 V5.5" fill="none" stroke="#eef6dd" stroke-width="2"/></svg>
<svg style="left:976px;top:182.4px" width="8" height="8" viewBox="0 0 8 8"><path d="M0.7 0.7 L7.3 7.3 M7.3 0.7 L0.7 7.3" stroke="#6b8450" stroke-width="1.8"/></svg>
<svg style="left:174.5px;top:222.3px" width="8" height="7" viewBox="0 0 8 7"><path d="M4 0 L8 3.6 H6.8 V7 H4.8 V4.8 H3.2 V7 H1.2 V3.6 H0Z" fill="#363a41"/><rect x="5.6" y="0.5" width="1.2" height="2" fill="#363a41"/></svg>
<svg style="left:271.2px;top:221.8px" width="8.5" height="8" viewBox="0 0 8.5 8"><path d="M0.3 7.7 L0.8 5.5 L5.8 0.5 L7.8 2.5 L2.8 7.5Z" fill="#3ab0e2"/></svg>
<span class="t" style="left:170.02px;top:254.27px;font-size:9.8px;line-height:9.8px;color:#555;font-weight:normal;transform:scaleX(0.6655);-webkit-text-stroke:0.15px #555;">CATEGORIES &gt; CUT AND CURL</span>
<div class="a" style="left:275.2px;top:251.8px;width:18.3px;height:12.2px;border:1px solid #ddd;border-radius:6px;background:#fff"></div>
<span class="t" style="left:281.84px;top:254.58px;font-size:9.2px;line-height:9.2px;color:#363a41;font-weight:normal;transform:scaleX(0.8580);-webkit-text-stroke:0.25px #363a41;">5</span>
<div class="a" style="left:167px;top:269px;width:823px;height:1px;background:#eef0f1"></div>
<div class="a" style="left:895.4px;top:250px;width:1px;height:18.5px;background:#f2f2f2"></div>
<div class="a" style="left:914.8px;top:250px;width:1px;height:18.5px;background:#f2f2f2"></div>
<div class="a" style="left:934.6px;top:250px;width:1px;height:18.5px;background:#f2f2f2"></div>
<div class="a" style="left:953.5px;top:250px;width:1px;height:18.5px;background:#f2f2f2"></div>
<div class="a" style="left:973px;top:250px;width:1px;height:18.5px;background:#f2f2f2"></div>
<svg style="left:899.5px;top:253.5px" width="12" height="11" viewBox="0 0 12 11"><path d="M7 1.5 H1 V10 H9.5 V5" fill="none" stroke="#c9c9c9" stroke-width="1.3"/><path d="M4.5 7.5 L5 5.6 L10.2 0.4 L11.6 1.8 L6.4 7Z" fill="#c9c9c9"/></svg>
<svg style="left:919px;top:253.5px" width="11" height="11" viewBox="0 0 11 11"><circle cx="5.5" cy="5.5" r="5.3" fill="#c9c9c9"/><path d="M5.5 2.5 V8.5 M2.5 5.5 H8.5" stroke="#fff" stroke-width="1.6"/></svg>
<svg style="left:938.5px;top:253.5px" width="11" height="11" viewBox="0 0 11 11"><path d="M9.6 4 A4.3 4.3 0 0 0 1.8 3.3 M1.4 7 A4.3 4.3 0 0 0 9.2 7.7" fill="none" stroke="#c9c9c9" stroke-width="1.6"/><path d="M7 4.5 H10.6 V0.9Z M4 6.5 H0.4 V10.1Z" fill="#c9c9c9"/></svg>
<svg style="left:957.5px;top:254px" width="12" height="10" viewBox="0 0 12 10"><path d="M0.8 1.5 L4.2 4.5 L0.8 7.5 M5 9 H11.5" fill="none" stroke="#c9c9c9" stroke-width="1.2"/></svg>
<svg style="left:977.5px;top:253px" width="12" height="13" viewBox="0 0 12 13"><path d="M0.5 2.2 A5.5 2 0 0 1 11.5 2.2 V10.8 A5.5 2 0 0 1 0.5 10.8Z" fill="#bdbdbd"/><path d="M0.5 2.4 A5.5 2 0 0 0 11.5 2.4 M0.5 5.3 A5.5 2 0 0 0 11.5 5.3 M0.5 8.2 A5.5 2 0 0 0 11.5 8.2" fill="none" stroke="#fff" stroke-width="0.8"/></svg>
<span class="t" style="left:213.30px;top:286.21px;font-size:8.7px;line-height:8.7px;color:#6c7a80;font-weight:normal;transform:scaleX(1.0192);">ID</span>
<svg style="left:223.6px;top:287.6px" width="14" height="5" viewBox="0 0 14 5"><path d="M0 0.6 H6 L3 4.1Z" fill="#25b9d7"/><path d="M7.8 4.1 H13.6 L10.7 0.6Z" fill="#25b9d7"/></svg>
<span class="t" style="left:246.30px;top:286.21px;font-size:8.7px;line-height:8.7px;color:#6c7a80;font-weight:normal;transform:scaleX(0.9632);">Name</span>
<svg style="left:270.8px;top:287.6px" width="14" height="5" viewBox="0 0 14 5"><path d="M0 0.6 H6 L3 4.1Z" fill="#25b9d7"/><path d="M7.8 4.1 H13.6 L10.7 0.6Z" fill="#25b9d7"/></svg>
<span class="t" style="left:392.50px;top:286.11px;font-size:8.7px;line-height:8.7px;color:#6c7a80;font-weight:normal;transform:scaleX(0.9578);">Description</span>
<span class="t" style="left:730.70px;top:286.21px;font-size:8.7px;line-height:8.7px;color:#555;font-weight:bold;transform:scaleX(0.9224);">Position</span>
<svg style="left:763.8px;top:287.6px" width="14" height="5" viewBox="0 0 14 5"><path d="M0 0.6 H6 L3 4.1Z" fill="#25b9d7"/><path d="M7.8 4.1 H13.6 L10.7 0.6Z" fill="#363a41"/></svg>
<span class="t" style="left:840.30px;top:286.21px;font-size:8.7px;line-height:8.7px;color:#6c7a80;font-weight:normal;transform:scaleX(0.9416);">Displayed</span>
<div class="a" style="left:177px;top:300px;width:802px;height:35px;background:#eaf4fa;border-top:1px solid #bfe0f0;border-bottom:1px solid #bfe0f0"></div>
<span class="t" style="left:190.25px;top:308.15px;font-size:9px;line-height:9px;color:#555;font-weight:normal;transform:scaleX(0.7965);">--</span>
<div class="a" style="left:213.7px;top:306px;width:23px;height:20.5px;background:#f5f8f9;border:1px solid #bbdcec;border-radius:3px"></div>
<div class="a" style="left:247px;top:306px;width:135.7px;height:20.5px;background:#f5f8f9;border:1px solid #bbdcec;border-radius:3px"></div>
<div class="a" style="left:393px;top:306px;width:282.6px;height:20.5px;background:#f5f8f9;border:1px solid #bbdcec;border-radius:3px"></div>
<div class="a" style="left:686.2px;top:306px;width:136.4px;height:20.5px;background:#f5f8f9;border:1px solid #bbdcec;border-radius:3px"></div>
<div class="a" style="left:833.3px;top:306px;width:51.2px;height:20.5px;background:#f5f8f9;border:1px solid #bbdcec;border-radius:3px"></div>
<span class="t" style="left:840.05px;top:312.45px;font-size:9px;line-height:9px;color:#555;font-weight:normal;transform:scaleX(1.0811);">-</span>
<svg style="left:875px;top:314.5px" width="7" height="5" viewBox="0 0 7 5"><path d="M0.6 0.6 L3.5 3.6 L6.4 0.6" fill="none" stroke="#555" stroke-width="1.1"/></svg>
<div class="a" style="left:927.3px;top:306.3px;width:46.3px;height:20.4px;background:#fff;border:1px solid #e0e0e0;border-radius:3px"></div>
<svg style="left:933px;top:311.5px" width="9" height="9" viewBox="0 0 9 9"><circle cx="3.6" cy="3.6" r="2.8" fill="none" stroke="#363a41" stroke-width="1.3"/><path d="M5.6 5.6 L8.3 8.3" stroke="#363a41" stroke-width="1.6"/></svg>
<span class="t" style="left:943.10px;top:312.71px;font-size:8.7px;line-height:8.7px;color:#555;font-weight:normal;transform:scaleX(0.8866);">Search</span>
<div class="a" style="left:177px;top:335.0px;width:802px;height:24.5px;background:#f8fafc;border-bottom:1px solid #eceeef"></div>
<div class="a" style="left:189px;top:341.5px;width:9.5px;height:9.5px;border:1px solid #9a9a9a;border-radius:1px;background:#fff"></div>
<span class="t" style="left:220.26px;top:343.11px;font-size:8.7px;line-height:8.7px;color:#5c5c5c;font-weight:normal;transform:scaleX(0.9308);">18</span>
<span class="t" style="left:245.70px;top:343.11px;font-size:8.7px;line-height:8.7px;color:#5c5c5c;font-weight:normal;transform:scaleX(0.9258);">Small</span>
<span class="t" style="left:392.50px;top:343.11px;font-size:8.7px;line-height:8.7px;color:#5c5c5c;font-weight:normal;transform:scaleX(0.9332);">These candles are roughly four inches tall.</span>
<svg style="left:689.5px;top:341.5px" width="10" height="11" viewBox="0 0 10 11"><path d="M5 0.5 V10.5 M0.3 5.5 H9.7" stroke="#363a41" stroke-width="1.3"/><path d="M5 0 L7 2.3 H3Z M5 11 L7 8.7 H3Z M0 5.5 L2.3 3.5 V7.5Z M10 5.5 L7.7 3.5 V7.5Z" fill="#363a41"/></svg>
<div class="a" style="left:703px;top:340.8px;width:28px;height:13px;background:#eee;border:1px solid #ccc;border-radius:2px"></div>
<span class="t" style="left:714.05px;top:343.75px;font-size:9px;line-height:9px;color:#b0b0b0;font-weight:normal;">1</span>
<svg style="left:854.5px;top:344.0px" width="9" height="7" viewBox="0 0 9 7"><path d="M0.8 3.5 L3.3 6 L8.2 1" fill="none" stroke="#5cb85c" stroke-width="1.8"/></svg>
<div class="a" style="left:921px;top:337.7px;width:53.6px;height:19.4px;background:#fff;border:1px solid #e0e0e0;border-radius:3px"></div>
<svg style="left:927px;top:343.0px" width="8" height="8" viewBox="0 0 8 8"><path d="M0.3 7.7 L0.8 5.5 L5.5 0.8 L7.2 2.5 L2.5 7.2Z" fill="#363a41"/></svg>
<span class="t" style="left:937.10px;top:343.11px;font-size:8.7px;line-height:8.7px;color:#555;font-weight:normal;transform:scaleX(0.8950);">Edit</span>
<svg style="left:960.5px;top:345.5px" width="6" height="4" viewBox="0 0 6 4"><path d="M0 0 H6 L3 3.3Z" fill="#363a41"/></svg>
<div class="a" style="left:177px;top:359.675px;width:802px;height:24.5px;background:#fff;border-bottom:1px solid #eceeef"></div>
<div class="a" style="left:189px;top:366.175px;width:9.5px;height:9.5px;border:1px solid #9a9a9a;border-radius:1px;background:#fff"></div>
<span class="t" style="left:220.26px;top:367.78px;font-size:8.7px;line-height:8.7px;color:#5c5c5c;font-weight:normal;transform:scaleX(0.9308);">19</span>
<span class="t" style="left:245.70px;top:367.78px;font-size:8.7px;line-height:8.7px;color:#5c5c5c;font-weight:normal;transform:scaleX(0.9719);">Medium</span>
<span class="t" style="left:392.50px;top:367.78px;font-size:8.7px;line-height:8.7px;color:#5c5c5c;font-weight:normal;transform:scaleX(0.9248);">These candles are roughly six inches tall.</span>
<svg style="left:689.5px;top:366.175px" width="10" height="11" viewBox="0 0 10 11"><path d="M5 0.5 V10.5 M0.3 5.5 H9.7" stroke="#363a41" stroke-width="1.3"/><path d="M5 0 L7 2.3 H3Z M5 11 L7 8.7 H3Z M0 5.5 L2.3 3.5 V7.5Z M10 5.5 L7.7 3.5 V7.5Z" fill="#363a41"/></svg>
<div class="a" style="left:703px;top:365.475px;width:28px;height:13px;background:#eee;border:1px solid #ccc;border-radius:2px"></div>
<span class="t" style="left:714.05px;top:368.43px;font-size:9px;line-height:9px;color:#b0b0b0;font-weight:normal;">1</span>
<svg style="left:854.5px;top:368.675px" width="9" height="7" viewBox="0 0 9 7"><path d="M0.8 3.5 L3.3 6 L8.2 1" fill="none" stroke="#5cb85c" stroke-width="1.8"/></svg>
<div class="a" style="left:921px;top:362.375px;width:53.6px;height:19.4px;background:#fff;border:1px solid #e0e0e0;border-radius:3px"></div>
<svg style="left:927px;top:367.675px" width="8" height="8" viewBox="0 0 8 8"><path d="M0.3 7.7 L0.8 5.5 L5.5 0.8 L7.2 2.5 L2.5 7.2Z" fill="#363a41"/></svg>
<span class="t" style="left:937.10px;top:367.78px;font-size:8.7px;line-height:8.7px;color:#555;font-weight:normal;transform:scaleX(0.8950);">Edit</span>
<svg style="left:960.5px;top:370.175px" width="6" height="4" viewBox="0 0 6 4"><path d="M0 0 H6 L3 3.3Z" fill="#363a41"/></svg>
<div class="a" style="left:177px;top:384.35px;width:802px;height:24.5px;background:#f8fafc;border-bottom:1px solid #eceeef"></div>
<div class="a" style="left:189px;top:390.85px;width:9.5px;height:9.5px;border:1px solid #9a9a9a;border-radius:1px;background:#fff"></div>
<span class="t" style="left:220.26px;top:392.46px;font-size:8.7px;line-height:8.7px;color:#5c5c5c;font-weight:normal;transform:scaleX(0.9308);">20</span>
<span class="t" style="left:245.70px;top:392.46px;font-size:8.7px;line-height:8.7px;color:#5c5c5c;font-weight:normal;transform:scaleX(0.9184);">Large</span>
<span class="t" style="left:392.50px;top:392.46px;font-size:8.7px;line-height:8.7px;color:#5c5c5c;font-weight:normal;transform:scaleX(0.9269);">These candles are roughly seven and a half inches tall.</span>
<svg style="left:689.5px;top:390.85px" width="10" height="11" viewBox="0 0 10 11"><path d="M5 0.5 V10.5 M0.3 5.5 H9.7" stroke="#363a41" stroke-width="1.3"/><path d="M5 0 L7 2.3 H3Z M5 11 L7 8.7 H3Z M0 5.5 L2.3 3.5 V7.5Z M10 5.5 L7.7 3.5 V7.5Z" fill="#363a41"/></svg>
<div class="a" style="left:703px;top:390.15000000000003px;width:28px;height:13px;background:#eee;border:1px solid #ccc;border-radius:2px"></div>
<span class="t" style="left:714.05px;top:393.10px;font-size:9px;line-height:9px;color:#b0b0b0;font-weight:normal;">1</span>
<svg style="left:854.5px;top:393.35px" width="9" height="7" viewBox="0 0 9 7"><path d="M0.8 3.5 L3.3 6 L8.2 1" fill="none" stroke="#5cb85c" stroke-width="1.8"/></svg>
<div class="a" style="left:921px;top:387.05px;width:53.6px;height:19.4px;background:#fff;border:1px solid #e0e0e0;border-radius:3px"></div>
<svg style="left:927px;top:392.35px" width="8" height="8" viewBox="0 0 8 8"><path d="M0.3 7.7 L0.8 5.5 L5.5 0.8 L7.2 2.5 L2.5 7.2Z" fill="#363a41"/></svg>
<span class="t" style="left:937.10px;top:392.46px;font-size:8.7px;line-height:8.7px;color:#555;font-weight:normal;transform:scaleX(0.8950);">Edit</span>
<svg style="left:960.5px;top:394.85px" width="6" height="4" viewBox="0 0 6 4"><path d="M0 0 H6 L3 3.3Z" fill="#363a41"/></svg>
<div class="a" style="left:177px;top:409.025px;width:802px;height:24.5px;background:#fff;border-bottom:1px solid #eceeef"></div>
<div class="a" style="left:189px;top:415.525px;width:9.5px;height:9.5px;border:1px solid #9a9a9a;border-radius:1px;background:#fff"></div>
<span class="t" style="left:220.26px;top:417.13px;font-size:8.7px;line-height:8.7px;color:#5c5c5c;font-weight:normal;transform:scaleX(0.9308);">21</span>
<span class="t" style="left:245.70px;top:417.13px;font-size:8.7px;line-height:8.7px;color:#5c5c5c;font-weight:normal;transform:scaleX(0.9153);">Extra Large</span>
<span class="t" style="left:392.50px;top:417.13px;font-size:8.7px;line-height:8.7px;color:#5c5c5c;font-weight:normal;transform:scaleX(0.9294);">These candles are roughly ten inches tall.</span>
<svg style="left:689.5px;top:415.525px" width="10" height="11" viewBox="0 0 10 11"><path d="M5 0.5 V10.5 M0.3 5.5 H9.7" stroke="#363a41" stroke-width="1.3"/><path d="M5 0 L7 2.3 H3Z M5 11 L7 8.7 H3Z M0 5.5 L2.3 3.5 V7.5Z M10 5.5 L7.7 3.5 V7.5Z" fill="#363a41"/></svg>
<div class="a" style="left:703px;top:414.825px;width:28px;height:13px;background:#eee;border:1px solid #ccc;border-radius:2px"></div>
<span class="t" style="left:714.05px;top:417.78px;font-size:9px;line-height:9px;color:#b0b0b0;font-weight:normal;">1</span>
<svg style="left:854.5px;top:418.025px" width="9" height="7" viewBox="0 0 9 7"><path d="M0.8 3.5 L3.3 6 L8.2 1" fill="none" stroke="#5cb85c" stroke-width="1.8"/></svg>
<div class="a" style="left:921px;top:411.72499999999997px;width:53.6px;height:19.4px;background:#fff;border:1px solid #e0e0e0;border-radius:3px"></div>
<svg style="left:927px;top:417.025px" width="8" height="8" viewBox="0 0 8 8"><path d="M0.3 7.7 L0.8 5.5 L5.5 0.8 L7.2 2.5 L2.5 7.2Z" fill="#363a41"/></svg>
<span class="t" style="left:937.10px;top:417.13px;font-size:8.7px;line-height:8.7px;color:#555;font-weight:normal;transform:scaleX(0.8950);">Edit</span>
<svg style="left:960.5px;top:419.525px" width="6" height="4" viewBox="0 0 6 4"><path d="M0 0 H6 L3 3.3Z" fill="#363a41"/></svg>
<div class="a" style="left:177px;top:433.7px;width:802px;height:24.5px;background:#f8fafc;border-bottom:1px solid #eceeef"></div>
<div class="a" style="left:189px;top:440.2px;width:9.5px;height:9.5px;border:1px solid #9a9a9a;border-radius:1px;background:#fff"></div>
<span class="t" style="left:220.26px;top:441.81px;font-size:8.7px;line-height:8.7px;color:#5c5c5c;font-weight:normal;transform:scaleX(0.9308);">27</span>
<span class="t" style="left:245.70px;top:441.81px;font-size:8.7px;line-height:8.7px;color:#5c5c5c;font-weight:normal;transform:scaleX(0.9184);">Angel</span>
<span class="t" style="left:392.50px;top:441.81px;font-size:8.7px;line-height:8.7px;color:#5c5c5c;font-weight:normal;transform:scaleX(0.9302);">Carved to resemble a praying Angel.</span>
<svg style="left:689.5px;top:440.2px" width="10" height="11" viewBox="0 0 10 11"><path d="M5 0.5 V10.5 M0.3 5.5 H9.7" stroke="#363a41" stroke-width="1.3"/><path d="M5 0 L7 2.3 H3Z M5 11 L7 8.7 H3Z M0 5.5 L2.3 3.5 V7.5Z M10 5.5 L7.7 3.5 V7.5Z" fill="#363a41"/></svg>
<div class="a" style="left:703px;top:439.5px;width:28px;height:13px;background:#eee;border:1px solid #ccc;border-radius:2px"></div>
<span class="t" style="left:714.05px;top:442.45px;font-size:9px;line-height:9px;color:#b0b0b0;font-weight:normal;">1</span>
<svg style="left:854.5px;top:442.7px" width="9" height="7" viewBox="0 0 9 7"><path d="M0.8 3.5 L3.3 6 L8.2 1" fill="none" stroke="#5cb85c" stroke-width="1.8"/></svg>
<div class="a" style="left:921px;top:436.4px;width:53.6px;height:19.4px;background:#fff;border:1px solid #e0e0e0;border-radius:3px"></div>
<svg style="left:927px;top:441.7px" width="8" height="8" viewBox="0 0 8 8"><path d="M0.3 7.7 L0.8 5.5 L5.5 0.8 L7.2 2.5 L2.5 7.2Z" fill="#363a41"/></svg>
<span class="t" style="left:937.10px;top:441.81px;font-size:8.7px;line-height:8.7px;color:#555;font-weight:normal;transform:scaleX(0.8950);">Edit</span>
<svg style="left:960.5px;top:444.2px" width="6" height="4" viewBox="0 0 6 4"><path d="M0 0 H6 L3 3.3Z" fill="#363a41"/></svg>
<div class="a" style="left:177.5px;top:472.5px;width:62.7px;height:20px;background:#fff;border:1px solid #e0e0e0;border-radius:3px"></div>
<span class="t" style="left:182.80px;top:478.71px;font-size:8.7px;line-height:8.7px;color:#555;font-weight:normal;transform:scaleX(0.9678);">Bulk actions</span>
<svg style="left:229.5px;top:481px" width="6" height="4" viewBox="0 0 6 4"><path d="M0 3.5 H6 L3 0.3Z" fill="#363a41"/></svg>
<div class="a" style="left:165px;top:502px;width:827px;height:47px;background:#fafbfc;border-top:1px solid #eceeef"></div>
<div class="a" style="left:174.6px;top:509.5px;width:50px;height:35.7px;background:#fff;border:1px solid #e0e0e0;border-radius:3px"></div>
<svg style="left:192px;top:515px" width="15" height="15" viewBox="0 0 15 15"><circle cx="7.5" cy="7.5" r="7.4" fill="#363a41"/><path d="M3.5 7.5 H11.5 M7.5 3.5 L3.5 7.5 L7.5 11.5" fill="none" stroke="#fff" stroke-width="2"/></svg>
<span class="t" style="left:179.30px;top:533.21px;font-size:8.7px;line-height:8.7px;color:#555;font-weight:normal;transform:scaleX(0.9360);">Back to list</span>
<span class="t" style="left:24.58px;top:734.65px;font-size:9px;line-height:9px;color:#ddd;font-weight:normal;transform:scaleX(0.8532);">PrestaShop™</span>
<span class="t" style="left:75.15px;top:734.65px;font-size:9px;line-height:9px;color:#ddd;font-weight:normal;transform:scaleX(0.8649);">-</span>
<svg style="left:80px;top:735.3px" width="8" height="8" viewBox="0 0 8 8"><circle cx="4" cy="4" r="3.3" fill="none" stroke="#ddd" stroke-width="1.1"/><path d="M2.6 5.3 L4.3 3.4" fill="none" stroke="#ddd" stroke-width="1"/></svg>
<span class="t" style="left:89.45px;top:734.65px;font-size:9px;line-height:9px;color:#ddd;font-weight:normal;transform:scaleX(0.8729);">0.181s</span>
<svg style="left:187px;top:731px" width="16" height="16" viewBox="0 0 16 16"><circle cx="8" cy="8" r="7.9" fill="#5eb6e4"/><path d="M3.5 10.5 Q6.5 11.8 9.3 10 Q11.8 8.2 11.7 5.5 L12.7 4.6 L11.6 4.8 Q10.8 3.8 9.5 4 Q8.2 4.3 8 6 Q5.5 5.8 4 4.2 Q3.4 5.8 4.8 7 L4 6.8 Q4.2 8.3 5.7 8.7 L4.8 8.8 Q5.4 10 6.8 10 Q5.3 10.8 3.5 10.5Z" fill="#fff"/></svg>
<svg style="left:207px;top:731px" width="16" height="16" viewBox="0 0 16 16"><circle cx="8" cy="8" r="7.9" fill="#4a6fb5"/><path d="M8.7 13 V8.5 H10.2 L10.4 6.8 H8.7 V5.8 Q8.7 5 9.5 5 H10.5 V3.5 Q9.8 3.4 9 3.4 Q7 3.5 7 5.6 V6.8 H5.6 V8.5 H7 V13Z" fill="#fff"/></svg>
<svg style="left:227px;top:731px" width="16" height="16" viewBox="0 0 16 16"><circle cx="8" cy="8" r="7.9" fill="#fff"/><path d="M6.3 13.3 V11.3 Q4.6 11.5 4 10 M9.7 13.3 V10.8 Q12.3 10.3 12.2 7.3 Q12.2 6.2 11.5 5.5 Q11.8 4.5 11.3 3.6 Q10.4 3.6 9.5 4.3 Q8 3.9 6.5 4.3 Q5.6 3.6 4.7 3.6 Q4.2 4.5 4.5 5.5 Q3.8 6.2 3.8 7.3 Q3.8 10.3 6.5 10.8 Q6.2 11.1 6.2 11.6" fill="#222" stroke="#222" stroke-width="0.5"/></svg>
<svg style="left:247px;top:731px" width="16" height="16" viewBox="0 0 16 16"><circle cx="8" cy="8" r="7.9" fill="#e05a48"/><text x="7.8" y="10.8" font-size="8" font-family="Liberation Sans" font-weight="bold" text-anchor="middle" fill="#fff">g+</text></svg>
<svg style="left:354px;top:735.2px" width="9.3" height="7.2" viewBox="0 0 9.3 7.2"><path d="M0 0 H9.3 V7.2 H0Z" fill="#fff"/><path d="M0.3 0.8 L4.65 4 L9 0.8" fill="none" stroke="#333" stroke-width="0.9"/></svg>
<span class="t" style="left:364.48px;top:734.70px;font-size:9px;line-height:9px;color:#25a8d8;font-weight:normal;transform:scaleX(0.9096);">Contact</span>
<span class="t" style="left:394.65px;top:734.70px;font-size:9px;line-height:9px;color:#ddd;font-weight:normal;transform:scaleX(1.0477);">/</span>
<svg style="left:402.3px;top:734px" width="8.2" height="9" viewBox="0 0 8 9"><ellipse cx="4" cy="5.5" rx="2.6" ry="3.2" fill="#fff"/><circle cx="4" cy="1.8" r="1.5" fill="#fff"/><path d="M0 3.5 L2 4.5 M8 3.5 L6 4.5 M0 6 H2 M8 6 H6 M0.5 8.5 L2 7.5 M7.5 8.5 L6 7.5" stroke="#fff" stroke-width=".8"/><path d="M4 3 V8.5" stroke="#333" stroke-width=".6"/></svg>
<span class="t" style="left:411.98px;top:734.70px;font-size:9px;line-height:9px;color:#25a8d8;font-weight:normal;transform:scaleX(0.8906);">Bug Tracker</span>
<span class="t" style="left:457.35px;top:734.70px;font-size:9px;line-height:9px;color:#ddd;font-weight:normal;transform:scaleX(1.0477);">/</span>
<svg style="left:464.3px;top:734.5px" width="10" height="8" viewBox="0 0 10 8"><ellipse cx="4" cy="3" rx="4" ry="2.8" fill="#fff"/><ellipse cx="6.3" cy="5" rx="3.6" ry="2.6" fill="#fff" stroke="#333" stroke-width=".6"/></svg>
<span class="t" style="left:475.28px;top:734.70px;font-size:9px;line-height:9px;color:#25a8d8;font-weight:normal;transform:scaleX(0.9238);">Forum</span>
<span class="t" style="left:501.75px;top:734.70px;font-size:9px;line-height:9px;color:#ddd;font-weight:normal;transform:scaleX(1.0477);">/</span>
<svg style="left:508.7px;top:734px" width="9.5" height="9" viewBox="0 0 10 9"><path d="M0 3 H3 Q2 0.5 4 0.5 Q6 0.5 5 3 H7.5 V5 Q9.8 4 9.8 5.8 Q9.8 7.5 7.5 6.6 V9 H0Z" fill="#fff"/></svg>
<span class="t" style="left:518.48px;top:734.70px;font-size:9px;line-height:9px;color:#25a8d8;font-weight:normal;transform:scaleX(0.9148);">Addons</span>
<span class="t" style="left:549.05px;top:734.70px;font-size:9px;line-height:9px;color:#ddd;font-weight:normal;transform:scaleX(1.0477);">/</span>
<svg style="left:555.4px;top:734px" width="9.8" height="9" viewBox="0 0 9 9"><path d="M2 0.5 H8.5 L7 8.5 H0.5Z" fill="#fff"/><path d="M2.5 2.5 H7 M2.2 4.5 H6.5" stroke="#333" stroke-width=".7"/></svg>
<span class="t" style="left:565.98px;top:734.70px;font-size:9px;line-height:9px;color:#25a8d8;font-weight:normal;transform:scaleX(0.9206);">Training</span>
</body></html>
